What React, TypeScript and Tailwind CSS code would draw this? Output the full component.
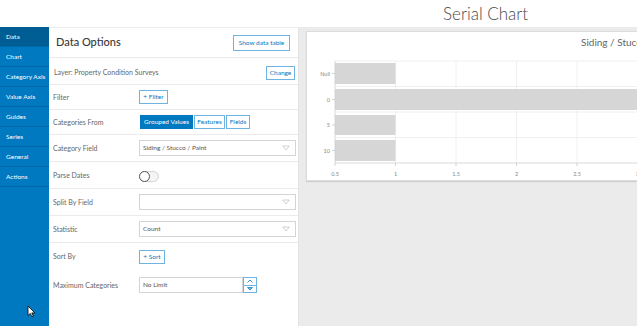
import React from 'react';

const navItems = [
  'Data',
  'Chart',
  'Category Axis',
  'Value Axis',
  'Guides',
  'Series',
  'General',
  'Actions',
];

const Caret = () => (
  <svg width="8" height="6" viewBox="0 0 8 6" className="shrink-0">
    <path d="M0.8 1 L7.2 1 L4 5 Z" fill="none" stroke="#c4c4c4" strokeWidth="0.8" />
  </svg>
);

const Select = ({ value }: { value: string }) => (
  <div className="flex items-center justify-between w-[157px] h-[16px] border border-[#d4d4d4] bg-white pl-[3px] pr-[5px] text-[6.5px] text-[#555]">
    <span>{value}</span>
    <Caret />
  </div>
);

const OutlineBtn = ({ label, w }: { label: string; w: string }) => (
  <div
    className={`flex items-center justify-center h-[14px] border border-[#6fb3e0] bg-white text-[6.5px] text-[#0079c1] ${w}`}
  >
    {label}
  </div>
);

const Row = ({
  label,
  h,
  border = true,
  children,
}: {
  label: string;
  h: string;
  border?: boolean;
  children?: React.ReactNode;
}) => (
  <div className={`flex items-center pl-[4px] ${h} ${border ? 'border-b border-[#ebebeb]' : ''}`}>
    <div className="w-[86px] text-[7px] text-[#666]">{label}</div>
    {children}
  </div>
);

const Chart = () => {
  const x = (v: number) => 28 + (v - 0.5) * 121;
  const ticks = [0.5, 1, 1.5, 2, 2.5, 3];
  const cats = [
    { label: 'Null', y0: 31, y1: 52, v: 1 },
    { label: '0', y0: 57, y1: 78, v: 3.6 },
    { label: '5', y0: 83, y1: 103, v: 1 },
    { label: '10', y0: 108, y1: 129, v: 1 },
  ];
  return (
    <svg width="420" height="150" viewBox="0 0 420 150" style={{ fontFamily: 'Lato, sans-serif' }}>
      <text x="274" y="14" fontSize="10" fill="#666">
        Siding / Stucco / Paint
      </text>
      {/* grid */}
      <line x1="28" y1="29" x2="420" y2="29" stroke="#ececec" strokeWidth="0.8" />
      {[54.5, 80, 105.5].map((y) => (
        <line key={y} x1="28" y1={y} x2="420" y2={y} stroke="#ececec" strokeWidth="0.8" />
      ))}
      {ticks.slice(1).map((t) => (
        <line key={t} x1={x(t)} y1="29" x2={x(t)} y2="131" stroke="#ececec" strokeWidth="0.8" />
      ))}
      {/* bars */}
      {cats.map((c) => (
        <rect key={c.label} x="28" y={c.y0} width={x(c.v) - 28} height={c.y1 - c.y0} fill="#d6d6d6" />
      ))}
      {/* axes */}
      <line x1="28" y1="29" x2="28" y2="131" stroke="#cfcfcf" strokeWidth="0.8" />
      <line x1="28" y1="131" x2="420" y2="131" stroke="#cfcfcf" strokeWidth="0.8" />
      {cats.map((c) => {
        const cy = (c.y0 + c.y1) / 2;
        return (
          <g key={c.label}>
            <line x1="25" y1={cy} x2="28" y2={cy} stroke="#bbb" strokeWidth="0.6" />
            <text x="23" y={cy + 2} fontSize="5.5" fill="#888" textAnchor="end">
              {c.label}
            </text>
          </g>
        );
      })}
      {ticks.map((t) => (
        <g key={t}>
          <line x1={x(t)} y1="131" x2={x(t)} y2="134" stroke="#bbb" strokeWidth="0.6" />
          <text x={x(t)} y="144" fontSize="5.5" fill="#888" textAnchor="middle">
            {t}
          </text>
        </g>
      ))}
    </svg>
  );
};

export default function App() {
  return (
    <div className="relative w-[637px] h-[326px] overflow-hidden bg-white font-['Lato','Noto_Sans',sans-serif]">
      {/* Top strip */}
      <div className="h-[27px] flex items-center pl-[443px]">
        <span className="text-[17px] font-light text-[#4a4a4a] leading-none">Serial Chart</span>
      </div>

      <div className="flex h-[299px]">
        {/* Sidebar */}
        <div className="w-[49px] shrink-0 bg-[#0079c1]">
          {navItems.map((item, i) => (
            <div
              key={item}
              className={`h-[20px] flex items-center pl-[6px] text-[6.5px] text-white border-b border-[#006aa9] ${
                i === 0 ? 'bg-[#005e95]' : ''
              }`}
            >
              {item}
            </div>
          ))}
        </div>

        {/* Panel */}
        <div className="w-[250px] shrink-0 bg-white border-r border-[#e3e3e3] border-t border-t-[#ececec]">
          <div className="flex items-center justify-between h-[30px] border-b border-[#ebebeb] pl-[7px] pr-[8px]">
            <span className="text-[11px] font-medium text-[#383838]">Data Options</span>
            <div className="flex items-center justify-center w-[57px] h-[16px] border border-[#6fb3e0] text-[6.5px] text-[#0079c1]">
              Show data table
            </div>
          </div>
          <div className="flex items-center justify-between h-[27px] pt-[3px] border-b border-[#ebebeb] pl-[5px] pr-[3px]">
            <span className="text-[7px] text-[#666]">Layer: Property Condition Surveys</span>
            <OutlineBtn label="Change" w="w-[29px]" />
          </div>
          <Row label="Filter" h="h-[25px]">
            <OutlineBtn label="+ Filter" w="w-[29px]" />
          </Row>
          <Row label="Categories From" h="h-[25px]">
            <div className="flex gap-[1px] ml-[1px]">
              <div className="flex items-center justify-center w-[53px] h-[14px] bg-[#0079c1] text-[6.5px] text-white">
                Grouped Values
              </div>
              <OutlineBtn label="Features" w="w-[31px]" />
              <OutlineBtn label="Fields" w="w-[24px]" />
            </div>
          </Row>
          <Row label="Category Field" h="h-[27px]">
            <Select value="Siding / Stucco / Paint" />
          </Row>
          <Row label="Parse Dates" h="h-[27px]">
            <div className="relative w-[20px] h-[11px] rounded-full border border-[#d4d4d4] bg-[#f4f4f4] mt-[2px]">
              <div className="absolute left-[-1px] top-[-1px] w-[11px] h-[11px] rounded-full border border-[#555] bg-white" />
            </div>
          </Row>
          <Row label="Split By Field" h="h-[27px]">
            <Select value="" />
          </Row>
          <Row label="Statistic" h="h-[27px]">
            <Select value="Count" />
          </Row>
          <Row label="Sort By" h="h-[27px]" border={false}>
            <OutlineBtn label="+ Sort" w="w-[26px]" />
          </Row>
          <Row label="Maximum Categories" h="h-[30px]" border={false}>
            <div className="flex h-[16px]">
              <div className="flex items-center w-[104px] border border-[#d4d4d4] pl-[3px] text-[6.5px] text-[#555]">
                No Limit
              </div>
              <div className="flex flex-col w-[14px] border border-[#6fb3e0]">
                <div className="flex-1 flex items-center justify-center border-b border-[#6fb3e0]">
                  <svg width="6" height="4" viewBox="0 0 6 4">
                    <path d="M0.5 3.5 L3 1 L5.5 3.5" fill="none" stroke="#0079c1" strokeWidth="0.8" />
                  </svg>
                </div>
                <div className="flex-1 flex items-center justify-center">
                  <svg width="6" height="4" viewBox="0 0 6 4">
                    <path d="M0.5 0.5 L3 3 L5.5 0.5 Z" fill="#7bb7df" stroke="#0079c1" strokeWidth="0.7" />
                  </svg>
                </div>
              </div>
            </div>
          </Row>
        </div>

        {/* Chart area */}
        <div className="flex-1 bg-[#ebebeb] pt-[4px] pl-[7px] overflow-hidden">
          <div className="w-[420px] h-[150px] bg-white border border-[#dcdcdc] shadow-[0_1px_1px_rgba(0,0,0,0.12)] overflow-hidden">
            <Chart />
          </div>
        </div>
      </div>

      {/* mouse cursor */}
      <svg className="absolute left-[27px] top-[305px]" width="9" height="13" viewBox="0 0 9 13">
        <path d="M1 1 L1 10.5 L3.3 8.4 L4.9 11.8 L6.3 11.2 L4.8 7.9 L7.8 7.9 Z" fill="#fff" stroke="#000" strokeWidth="0.8" strokeLinejoin="round" />
      </svg>
    </div>
  );
}
